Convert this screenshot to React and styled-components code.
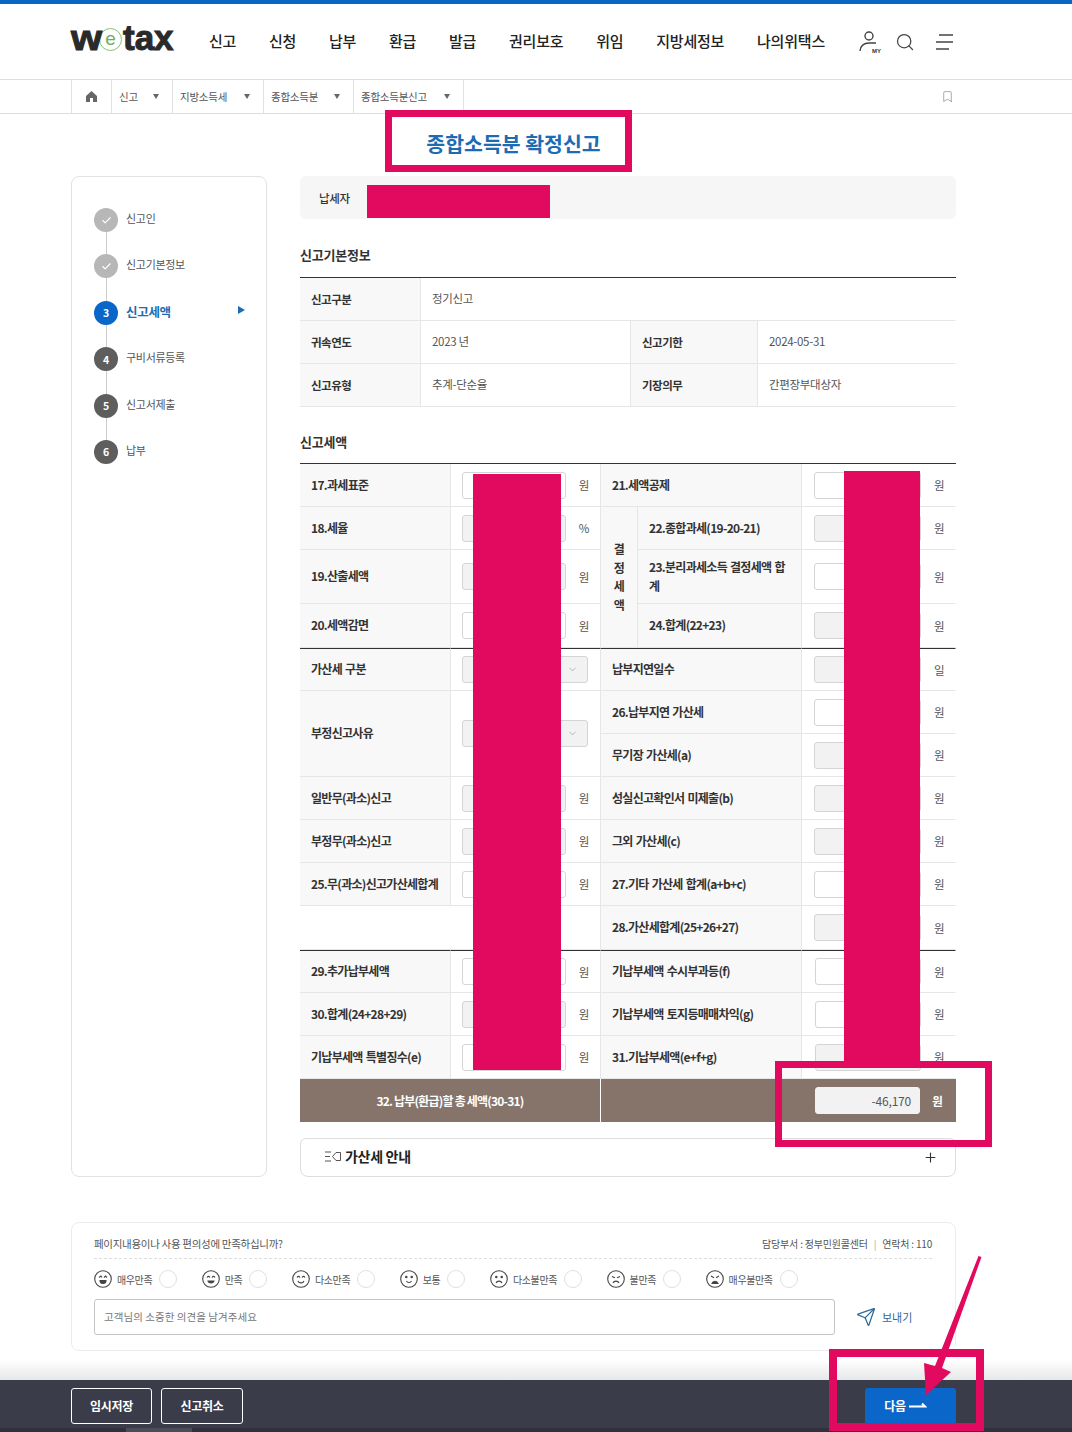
import React from 'react';
import styled, { createGlobalStyle } from 'styled-components';
import { Search, Send, Plus, ChevronDown, Check, Bookmark } from 'lucide-react';

const FONT = '"Noto Sans CJK KR", "Noto Sans", sans-serif';

const Global = createGlobalStyle`
  html, body { margin: 0; padding: 0; background: #fff; }
  * { box-sizing: border-box; }
  body { font-family: ${FONT}; color: #333; }
`;

const Page = styled.div`
  position: relative;
  width: 1072px;
  height: 1432px;
  overflow: hidden;
  display: flex;
  flex-direction: column;
  border-top: 4px solid #0a66c2;
`;

/* ---------- header ---------- */
const Header = styled.header`
  height: 76px;
  padding: 0 118px 0 71px;
  display: flex;
  align-items: center;
  border-bottom: 1px solid #ddd;
  flex: none;
`;
const Logo = styled.div`
  width: 138px;
  display: flex;
  align-items: center;
  font-family: "Liberation Sans", sans-serif;
  font-weight: 700;
  font-size: 35px;
  line-height: 1;
  color: #2a2a2a;
  -webkit-text-stroke: 1px #2a2a2a;
  letter-spacing: 0;
  margin-top: -8px;
`;
const LogoW = styled.span`
  display: inline-block;
  width: 28px;
  transform: scaleX(1.14);
  transform-origin: left center;
`;
const LogoE = styled.span`
  width: 23px;
  height: 23px;
  border-radius: 50%;
  border: 1.5px solid #86c078;
  background: #fff;
  color: #6fae62;
  -webkit-text-stroke: 0;
  font-size: 19px;
  font-weight: 400;
  display: flex;
  align-items: center;
  justify-content: center;
  margin: 4px 1px 0 0;
  padding-bottom: 2px;
  flex: none;
`;
const Nav = styled.nav`
  display: flex;
  gap: 32.8px;
  flex: 1;
  font-size: 15px;
  font-weight: 500;
  color: #222;
  letter-spacing: -0.2px;
  margin-top: -2px;
`;
const HeaderIcons = styled.div`
  display: flex;
  align-items: center;
  gap: 13px;
  color: #444;
  & > svg:last-child { margin-left: 7px; }
`;

/* ---------- breadcrumb ---------- */
const Crumbs = styled.div`
  height: 34px;
  padding: 0 118px 0 71px;
  display: flex;
  align-items: stretch;
  border-bottom: 1px solid #ddd;
  flex: none;
`;
const Crumb = styled.div`
  width: ${(p) => p.$w}px;
  border-left: 1px solid #e2e2e2;
  padding: 0 13px 0 7px;
  display: flex;
  align-items: center;
  justify-content: space-between;
  font-size: 10.5px;
  letter-spacing: -0.25px;
  color: #555;
`;
const CrumbHome = styled(Crumb)`
  justify-content: center;
  padding: 0;
`;
const CrumbEnd = styled.div`
  border-left: 1px solid #e2e2e2;
  flex: 1;
  display: flex;
  justify-content: flex-end;
  align-items: center;
  color: #888;
`;
const Caret = styled.i`
  width: 0;
  height: 0;
  border-left: 3.5px solid transparent;
  border-right: 3.5px solid transparent;
  border-top: 5px solid #666;
`;

/* ---------- title + layout ---------- */
const Title = styled.h1`
  margin: 0;
  height: 62px;
  flex: none;
  width: 1027px;
  text-align: center;
  font-size: 20.5px;
  font-weight: 700;
  line-height: 59px;
  color: #1b6cb3;
`;
const Body = styled.div`
  display: grid;
  grid-template-columns: 196px 656px;
  gap: 33px;
  padding-left: 71px;
  flex: none;
`;
const Side = styled.aside`
  border: 1px solid #e2e2e2;
  border-radius: 8px;
  padding: 31px 21px 0 22px;
`;
const Step = styled.div`
  position: relative;
  height: 46.4px;
  display: flex;
  align-items: flex-start;
  gap: 8px;
  font-size: ${(p) => (p.$active ? 12.5 : 11)}px;
  line-height: 21px;
  letter-spacing: -0.3px;
  font-weight: ${(p) => (p.$active ? 700 : 400)};
  color: ${(p) => (p.$active ? '#1b6cb3' : '#555')};
  &:not(:last-child)::before {
    content: '';
    position: absolute;
    left: 11.5px;
    top: 22px;
    width: 1px;
    height: 26px;
    background: #ccc;
  }
`;
const Dot = styled.span`
  position: relative;
  z-index: 1;
  width: 24px;
  height: 24px;
  border-radius: 50%;
  background: ${(p) => (p.$state === 'done' ? '#b7b7b7' : p.$state === 'active' ? '#0a66c8' : '#5e5e5e')};
  color: #fff;
  font-size: 10.5px;
  font-weight: 700;
  display: flex;
  align-items: center;
  justify-content: center;
  flex: none;
`;
const StepCaret = styled.i`
  margin: 5px 0 0 auto;
  width: 0;
  height: 0;
  border-top: 4.5px solid transparent;
  border-bottom: 4.5px solid transparent;
  border-left: 7px solid #1b6cb3;
`;
const Main = styled.main`
  display: flex;
  flex-direction: column;
`;
const Payer = styled.div`
  height: 43px;
  background: #f6f6f6;
  border-radius: 6px;
  padding-left: 19px;
  display: flex;
  align-items: center;
  font-size: 11.5px;
  font-weight: 500;
  letter-spacing: -0.3px;
  color: #333;
`;
const SectionTitle = styled.h2`
  margin: ${(p) => p.$before || 26}px 0 ${(p) => p.$after || 12}px;
  font-size: 13px;
  line-height: 20px;
  font-weight: 700;
  letter-spacing: -0.2px;
  color: #333;
`;

/* ---------- tables ---------- */
const Table = styled.table`
  width: 656px;
  table-layout: fixed;
  border-collapse: separate;
  border-spacing: 0;
  border-top: 1px solid #333;
  font-size: 11.5px;
`;
const Row = styled.tr`
  height: ${(p) => p.$h || 43}px;
  ${(p) => (p.$rule ? '& > * { border-top: 1px solid #333; }' : '')}
`;
const Th = styled.th`
  background: #f8f8f8;
  border-bottom: 1px solid #e6e6e6;
  border-right: 1px solid #e6e6e6;
  padding: 0 ${(p) => (p.$center ? 0 : 6)}px 0 ${(p) => (p.$center ? 0 : 11)}px;
  text-align: ${(p) => (p.$center ? 'center' : 'left')};
  font-weight: 700;
  font-size: 12px;
  line-height: 18.5px;
  letter-spacing: -0.7px;
  word-spacing: 1px;
  color: #333;
`;
const InfoTh = styled(Th)`
  font-size: 11.5px;
  letter-spacing: -0.5px;
`;
const Td = styled.td`
  border-bottom: 1px solid #e6e6e6;
  border-right: 1px solid ${(p) => (p.$end ? 'transparent' : '#e6e6e6')};
  padding: 0 0 0 ${(p) => p.$pad || 11}px;
  font-size: 11.5px;
  letter-spacing: -0.3px;
  color: #555;
`;
const InfoTd = styled(Td)`
  padding-bottom: 2px;
`;
const AmountBox = styled.div`
  display: flex;
  align-items: center;
`;
const Field = styled.input`
  width: ${(p) => p.$w}px;
  height: 27px;
  border: 1px solid #d5d5d5;
  border-radius: 3px;
  background: ${(p) => (p.$gray ? '#f2f2f2' : '#fff')};
  padding: 0 8px;
  text-align: right;
  font: 400 12px ${FONT};
  letter-spacing: -0.2px;
  color: #555;
  outline: none;
  flex: none;
`;
const Unit = styled.span`
  width: ${(p) => p.$w}px;
  text-align: center;
  font-size: 11.5px;
  color: #555;
  flex: none;
`;
const SelectBox = styled.div`
  width: 126px;
  height: 27px;
  border: 1px solid #d5d5d5;
  border-radius: 3px;
  background: #f2f2f2;
  display: flex;
  align-items: center;
  justify-content: flex-end;
  padding-right: 9px;
  color: #999;
`;
const TotalRow = styled.tr`
  height: 43px;
  background: #86746b;
`;
const TotalLabel = styled.td`
  border-right: 1px solid #fff;
  text-align: center;
  padding-bottom: 2px;
  color: #fff;
  font-size: 12px;
  font-weight: 700;
  letter-spacing: -0.8px;
`;
const TotalBox = styled(AmountBox)`
  justify-content: flex-end;
`;
const TotalField = styled(Field)`
  border-color: #f2f2f2;
`;
const TotalUnit = styled(Unit)`
  color: #fff;
  font-weight: 700;
`;

/* ---------- accordion ---------- */
const Accordion = styled.div`
  margin-top: 16px;
  height: 39px;
  border: 1px solid #ddd;
  border-radius: 6px 6px 8px 8px;
  display: flex;
  align-items: center;
  padding: 0 17px 3px 24px;
  gap: 4px;
  font-size: 14px;
  font-weight: 700;
  letter-spacing: -0.3px;
  color: #222;
`;
const AccordionPlus = styled.span`
  margin: 3px 0 0 auto;
  display: flex;
  color: #333;
`;

/* ---------- feedback ---------- */
const Feedback = styled.section`
  margin: 45px 0 0 71px;
  width: 885px;
  height: 129px;
  border: 1px solid #ececec;
  border-radius: 8px;
  padding: 10px 23px 0 22px;
  flex: none;
`;
const FeedbackHead = styled.div`
  display: flex;
  justify-content: space-between;
  align-items: center;
  height: 26px;
  padding-bottom: 5px;
  border-bottom: 1px dashed #ddd;
  font-size: 10.5px;
  letter-spacing: -0.3px;
  color: #555;
`;
const Contact = styled.span`
  display: flex;
  gap: 6px;
  font-size: 10px;
  letter-spacing: -0.2px;
`;
const Divider = styled.span`
  color: #aaa;
`;
const Faces = styled.div`
  display: flex;
  align-items: center;
  height: 40px;
  gap: 24.6px;
`;
const FaceItem = styled.label`
  display: flex;
  align-items: center;
  font-size: 10px;
  letter-spacing: -0.4px;
  color: #555;
  gap: 5px;
`;
const Radio = styled.span`
  width: 18px;
  height: 18px;
  border-radius: 50%;
  border: 1px solid #e0e0e0;
  margin-left: 2px;
`;
const Opinion = styled.div`
  display: flex;
  align-items: center;
`;
const OpinionInput = styled.input`
  width: 741px;
  height: 36px;
  border: 1px solid #c4c4c4;
  border-radius: 3px;
  padding: 0 9px 2px;
  font: 400 10.5px ${FONT};
  letter-spacing: 0.05px;
  outline: none;
  &::placeholder { color: #777; }
`;
const SendBtn = styled.span`
  display: flex;
  align-items: center;
  gap: 6px;
  margin-left: 21px;
  font-size: 11px;
  color: #2d6a99;
`;

/* ---------- footer ---------- */
const Fade = styled.div`
  margin-top: auto;
  height: 20px;
  background: linear-gradient(#ffffff, #e6e7e9);
  flex: none;
`;
const Footer = styled.footer`
  height: 52px;
  background: #3a3c49;
  flex: none;
  display: flex;
  flex-direction: column;
`;
const FooterBar = styled.div`
  padding: 8px 116px 0 71px;
  display: flex;
  gap: 9px;
  height: 48px;
`;
const FootBtn = styled.button`
  width: ${(p) => p.$w}px;
  height: 36px;
  padding: 0 0 2px;
  background: transparent;
  border: 1px solid #fff;
  border-radius: 3px;
  color: #fff;
  font: 700 12px ${FONT};
  letter-spacing: -0.3px;
`;
const NextBtn = styled.button`
  margin-left: auto;
  width: 91px;
  height: 36px;
  padding: 0 10px 2px 0;
  background: #0a66c8;
  border: 0;
  border-radius: 3px;
  color: #fff;
  font: 700 12px ${FONT};
  letter-spacing: -0.3px;
  display: flex;
  align-items: center;
  justify-content: center;
  gap: 3px;
`;
const FooterEdge = styled.div`
  height: 4px;
  background: #2f313c;
  padding-left: 126px;
`;
const EdgeThumb = styled.div`
  width: 66px;
  height: 4px;
  background: #4a4d5a;
`;

/* ---------- annotations laid over the screenshot ---------- */
const Redaction = styled.div`
  position: absolute;
  left: ${(p) => p.$x}px;
  top: ${(p) => p.$y - 4}px;
  width: ${(p) => p.$w}px;
  height: ${(p) => p.$h}px;
  background: #e20a5f;
`;
const Highlight = styled.div`
  position: absolute;
  left: ${(p) => p.$x}px;
  top: ${(p) => p.$y - 4}px;
  width: ${(p) => p.$w}px;
  height: ${(p) => p.$h}px;
  border: ${(p) => p.$b}px solid #e20a5f;
`;
const ArrowMark = styled.svg`
  position: absolute;
  left: 900px;
  top: 1246px;
`;

/* ---------- drawings ---------- */
const UserIcon = () => (
  <svg width="24" height="26" viewBox="0 0 24 26" fill="none" stroke="#444" strokeWidth="1.4">
    <circle cx="11" cy="7" r="4" />
    <path d="M2 22c0-5 4-8 9-8h7" />
    <text x="14" y="23.5" fontSize="6" fontWeight="700" stroke="none" fill="#333" fontFamily="Liberation Sans, sans-serif">MY</text>
  </svg>
);
const MenuIcon = () => (
  <svg width="19" height="18" viewBox="0 0 19 18" stroke="#444" strokeWidth="1.5">
    <path d="M4 2h14M1 9h17M1 16h13" />
  </svg>
);
const HomeIcon = () => (
  <svg width="11" height="11" viewBox="0 0 11 11" fill="#666">
    <path d="M5.5 0 11 5v6H7V7H4v4H0V5z" />
  </svg>
);
const ListIcon = () => (
  <svg width="16" height="11" viewBox="0 0 16 11" fill="none" stroke="#555" strokeWidth="1">
    <path d="M0 1h6M0 5.5h5M0 10h6M15.5 1.5H11L7.5 5.500 11 9.500h4.500M15.500 1.500v8" />
  </svg>
);
const ArrowRight = () => (
  <svg width="18" height="8" viewBox="0 0 18 8" fill="none" stroke="#fff" strokeWidth="2">
    <path d="M0 5.500h16L13 2.500" />
  </svg>
);
const FACE = {
  best: { eyes: 'M5 7.500l2-1.500 1 1.500M10 7.500l1.500-1.500 1.500 1.500', mouth: 'M6 10.500h6c0 4-6 4-6 0z', fill: true },
  good: { eyes: 'M5 7.500c1-1.500 2-1.500 3 0M10 7.500c1-1.500 2-1.500 3 0', mouth: 'M6 11h6c-.5 2.500-5.500 2.500-6 0z', fill: true },
  fair: { eyes: 'M5 7.500c1-1.500 2-1.500 3 0M10 7.500c1-1.500 2-1.500 3 0', mouth: 'M6 11c1 2.500 5 2.500 6 0' },
  mid: { dots: true, mouth: 'M6.500 11c1 2 4 2 5 0' },
  low: { dots: true, mouth: 'M6 13c1-2.500 5-2.500 6 0' },
  bad: { eyes: 'M5 6.500l3 1.200M13 6.500l-3 1.200', mouth: 'M6 13c1-2.500 5-2.500 6 0' },
  worst: { eyes: 'M5 6l3 1.800M13 6l-3 1.800', mouth: 'M6 13.500c1-3 5-3 6 0z', fill: true },
};
const Face = ({ kind }) => {
  const f = FACE[kind];
  return (
    <svg width="18" height="18" viewBox="0 0 18 18" fill="none" stroke="#444" strokeWidth="1.100">
      <circle cx="9" cy="9" r="8.300" />
      {f.dots ? (
        <>
          <circle cx="6.300" cy="7" r=".7" fill="#444" />
          <circle cx="11.700" cy="7" r=".7" fill="#444" />
        </>
      ) : (
        <path d={f.eyes} />
      )}
      <path d={f.mouth} fill={f.fill ? '#444' : 'none'} />
    </svg>
  );
};

const Amount = ({ gray, unit = '원' }) => (
  <AmountBox>
    <Field $w={104} $gray={gray} readOnly />
    <Unit $w={36}>{unit}</Unit>
  </AmountBox>
);
const RightAmount = ({ gray, unit, shift }) => (
  <Td $end $pad={shift ? 13 : 12}>
    <AmountBox>
      <Field $w={shift ? 106 : 107} $gray={gray} readOnly />
      <Unit $w={36}>{unit || '원'}</Unit>
    </AmountBox>
  </Td>
);
const Select = () => (
  <SelectBox>
    <ChevronDown size={11} strokeWidth={1.5} />
  </SelectBox>
);

const crumbs = [['신고', 61], ['지방소득세', 91], ['종합소득분', 90], ['종합소득분신고', 110]];
const steps = [
  ['신고인', 'done'],
  ['신고기본정보', 'done'],
  ['신고세액', 'active', '3'],
  ['구비서류등록', 'todo', '4'],
  ['신고서제출', 'todo', '5'],
  ['납부', 'todo', '6'],
];
const faces = [
  ['best', '매우만족'],
  ['good', '만족'],
  ['fair', '다소만족'],
  ['mid', '보통'],
  ['low', '다소불만족'],
  ['bad', '불만족'],
  ['worst', '매우불만족'],
];

export default function App() {
  return (
    <Page>
      <Global />
      <Header>
        <Logo>
          <LogoW>w</LogoW>
          <LogoE>e</LogoE>
          <span>tax</span>
        </Logo>
        <Nav>
          {['신고', '신청', '납부', '환급', '발급', '권리보호', '위임', '지방세정보', '나의위택스'].map((n) => (
            <span key={n}>{n}</span>
          ))}
        </Nav>
        <HeaderIcons>
          <UserIcon />
          <Search size={20} strokeWidth={1.5} />
          <MenuIcon />
        </HeaderIcons>
      </Header>

      <Crumbs>
        <CrumbHome $w={40}><HomeIcon /></CrumbHome>
        {crumbs.map(([t, w]) => (
          <Crumb key={t} $w={w}>
            <span>{t}</span>
            <Caret />
          </Crumb>
        ))}
        <CrumbEnd><Bookmark size={13} strokeWidth={1.3} /></CrumbEnd>
      </Crumbs>

      <Title>종합소득분 확정신고</Title>

      <Body>
        <Side>
          {steps.map(([label, state, num]) => (
            <Step key={label} $active={state === 'active'}>
              <Dot $state={state}>{num || <Check size={11} strokeWidth={2.5} />}</Dot>
              <span>{label}</span>
              {state === 'active' && <StepCaret />}
            </Step>
          ))}
        </Side>

        <Main>
          <Payer>납세자</Payer>

          <SectionTitle>신고기본정보</SectionTitle>
          <Table>
            <colgroup>
              <col width="121" /><col width="210" /><col width="127" /><col width="198" />
            </colgroup>
            <tbody>
              <Row>
                <InfoTh>신고구분</InfoTh>
                <InfoTd colSpan={3} $end>정기신고</InfoTd>
              </Row>
              <Row>
                <InfoTh>귀속연도</InfoTh>
                <InfoTd>2023 년</InfoTd>
                <InfoTh>신고기한</InfoTh>
                <InfoTd $end>2024-05-31</InfoTd>
              </Row>
              <Row>
                <InfoTh>신고유형</InfoTh>
                <InfoTd>추계-단순율</InfoTd>
                <InfoTh>기장의무</InfoTh>
                <InfoTd $end>간편장부대상자</InfoTd>
              </Row>
            </tbody>
          </Table>

          <SectionTitle $before={25} $after={11}>신고세액</SectionTitle>
          <Table>
            <colgroup>
              <col width="151" /><col width="150" /><col width="37" /><col width="164" /><col width="154" />
            </colgroup>
            <tbody>
              <Row>
                <Th>17.과세표준</Th>
                <Td><Amount /></Td>
                <Th colSpan={2}>21.세액공제</Th>
                <RightAmount />
              </Row>
              <Row>
                <Th>18.세율</Th>
                <Td><Amount gray unit="%" /></Td>
                <Th rowSpan={3} $center>결<br />정<br />세<br />액</Th>
                <Th>22.종합과세(19-20-21)</Th>
                <RightAmount gray />
              </Row>
              <Row $h={54}>
                <Th>19.산출세액</Th>
                <Td><Amount gray /></Td>
                <Th>23.분리과세소득 결정세액 합계</Th>
                <RightAmount />
              </Row>
              <Row $h={44}>
                <Th>20.세액감면</Th>
                <Td><Amount /></Td>
                <Th>24.합계(22+23)</Th>
                <RightAmount gray />
              </Row>
              <Row $rule>
                <Th>가산세 구분</Th>
                <Td><Select /></Td>
                <Th colSpan={2}>납부지연일수</Th>
                <RightAmount gray unit="일" />
              </Row>
              <Row>
                <Th rowSpan={2}>부정신고사유</Th>
                <Td rowSpan={2}><Select /></Td>
                <Th colSpan={2}>26.납부지연 가산세</Th>
                <RightAmount />
              </Row>
              <Row>
                <Th colSpan={2}>무기장 가산세(a)</Th>
                <RightAmount gray />
              </Row>
              <Row>
                <Th>일반무(과소)신고</Th>
                <Td><Amount gray /></Td>
                <Th colSpan={2}>성실신고확인서 미제출(b)</Th>
                <RightAmount gray />
              </Row>
              <Row>
                <Th>부정무(과소)신고</Th>
                <Td><Amount gray /></Td>
                <Th colSpan={2}>그외 가산세(c)</Th>
                <RightAmount gray />
              </Row>
              <Row>
                <Th>25.무(과소)신고가산세합계</Th>
                <Td><Amount /></Td>
                <Th colSpan={2}>27.기타 가산세 합계(a+b+c)</Th>
                <RightAmount />
              </Row>
              <Row $h={44}>
                <Td colSpan={2} />
                <Th colSpan={2}>28.가산세합계(25+26+27)</Th>
                <RightAmount gray />
              </Row>
              <Row $rule>
                <Th>29.추가납부세액</Th>
                <Td><Amount /></Td>
                <Th colSpan={2}>기납부세액 수시부과등(f)</Th>
                <RightAmount shift />
              </Row>
              <Row>
                <Th>30.합계(24+28+29)</Th>
                <Td><Amount gray /></Td>
                <Th colSpan={2}>기납부세액 토지등매매차익(g)</Th>
                <RightAmount shift />
              </Row>
              <Row>
                <Th>기납부세액 특별징수(e)</Th>
                <Td><Amount /></Td>
                <Th colSpan={2}>31.기납부세액(e+f+g)</Th>
                <RightAmount gray shift />
              </Row>
              <TotalRow>
                <TotalLabel colSpan={2}>32. 납부(환급)할 총 세액(30-31)</TotalLabel>
                <td colSpan={3}>
                  <TotalBox>
                    <TotalField $w={105} $gray readOnly value="-46,170" />
                    <TotalUnit $w={35}>원</TotalUnit>
                  </TotalBox>
                </td>
              </TotalRow>
            </tbody>
          </Table>

          <Accordion>
            <ListIcon />
            <span>가산세 안내</span>
            <AccordionPlus><Plus size={15} strokeWidth={1.8} /></AccordionPlus>
          </Accordion>
        </Main>
      </Body>

      <Feedback>
        <FeedbackHead>
          <span>페이지내용이나 사용 편의성에 만족하십니까?</span>
          <Contact>
            <span>담당부서 : 정부민원콜센터</span>
            <Divider>|</Divider>
            <span>연락처 : 110</span>
          </Contact>
        </FeedbackHead>
        <Faces>
          {faces.map(([k, label]) => (
            <FaceItem key={k}>
              <Face kind={k} />
              <span>{label}</span>
              <Radio />
            </FaceItem>
          ))}
        </Faces>
        <Opinion>
          <OpinionInput placeholder="고객님의 소중한 의견을 남겨주세요" readOnly />
          <SendBtn>
            <Send size={20} strokeWidth={1.5} />
            보내기
          </SendBtn>
        </Opinion>
      </Feedback>

      <Fade />
      <Footer>
        <FooterBar>
          <FootBtn $w={81}>임시저장</FootBtn>
          <FootBtn $w={82}>신고취소</FootBtn>
          <NextBtn>다음<ArrowRight /></NextBtn>
        </FooterBar>
        <FooterEdge><EdgeThumb /></FooterEdge>
      </Footer>

      <Redaction $x={367} $y={185} $w={183} $h={33} />
      <Redaction $x={473} $y={474} $w={88} $h={596} />
      <Redaction $x={844} $y={471} $w={76} $h={590} />
      <Highlight $x={385} $y={110} $w={247} $h={62} $b={7} />
      <Highlight $x={775} $y={1061} $w={217} $h={86} $b={7} />
      <Highlight $x={829} $y={1349} $w={155} $h={82} $b={8} />
      <ArrowMark width="90" height="160" viewBox="0 0 90 160">
        <path d="M78.500 6 81.500 7 42 118 51 122 26 145 24 113 35 116z" fill="#e20a5f" />
      </ArrowMark>
    </Page>
  );
}
